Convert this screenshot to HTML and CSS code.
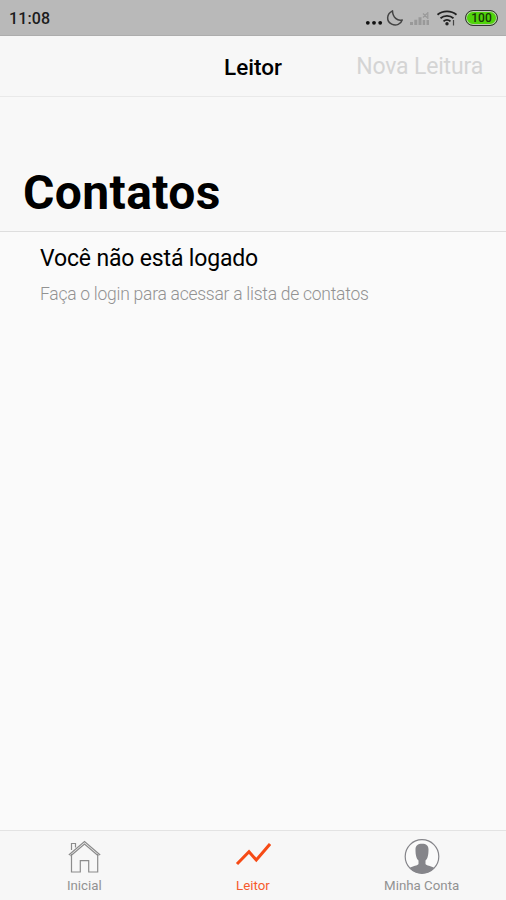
FILE: index.html
```html
<!DOCTYPE html>
<html lang="pt-BR">
<head>
<meta charset="utf-8">
<meta name="viewport" content="width=device-width, initial-scale=1">
<title>Leitor</title>
<link rel="stylesheet" href="styles.css">
</head>
<body>
<div class="app">
  <div class="status">
    <span class="time">11:08</span>
    <svg class="status-icons" width="98" height="24" viewBox="365 6 98 24">
      <g fill="#111"><circle cx="367.8" cy="22.8" r="1.9"/><circle cx="374" cy="22.8" r="1.9"/><circle cx="380.2" cy="22.8" r="1.9"/></g>
      <path d="M392.5 10.8c-6 3-6.600 10.500-.8 13.400 4.600 2.200 9.300-.3 10.500-4.200-4.600 1.300-9.600-2.500-9.700-9.200z" fill="none" stroke="#444" stroke-width="1.500" stroke-linejoin="round"/>
      <g fill="#999"><path d="M410 22h3v3h-3zM414.300 19.800h3V25h-3zM418.500 17.200h3V25h-3zM422.700 20h2.500v5h-2.500zM426.500 20h2.500v5h-2.500z"/><path d="M423 13.500l4 4m0-4l-4 4M427.800 12v7" stroke="#999" stroke-width="1.200"/></g>
      <g fill="none" stroke="#222" stroke-width="1.800"><path d="M437.500 14.700c5.200-4.500 13.800-4.500 19 0M440.500 18.200c3.600-3.100 9.400-3.100 13 0M443.500 21.300c2-1.800 5-1.800 7 0"/></g>
      <circle cx="447" cy="23.800" r="1.700" fill="#222"/><path d="M453.500 20v5.500" stroke="#444" stroke-width="1.200"/>
    </svg>
    <span class="battery">100</span>
  </div>
  <header class="nav">
    <span class="nav-title">Leitor</span>
    <span class="nav-action">Nova Leitura</span>
  </header>
  <div class="hero"><h1>Contatos</h1></div>
  <main class="content">
    <h2>Você não está logado</h2>
    <p>Faça o login para acessar a lista de contatos</p>
  </main>
  <nav class="tabs">
    <div class="tab">
      <svg width="36" height="38" viewBox="66 838 36 38" fill="none" stroke="#8c8c8c" stroke-width="1.200"><path d="M71.500 854v18h8.800v-11.300h8.400V872h9V854M68.800 855l15.700-13.500L100.200 855M70.500 856l14-12 14 12M71.500 850v-6.500h4v4"/></svg>
      <span>Inicial</span>
    </div>
    <div class="tab active">
      <svg width="36" height="38" viewBox="235.500 838 36 38" fill="none" stroke="#f64b16" stroke-width="3"><path d="M237.500 864l12-12.300 7.300 8.300L270.500 844"/></svg>
      <span>Leitor</span>
    </div>
    <div class="tab">
      <svg width="36" height="38" viewBox="404 838 36 38"><circle cx="422" cy="856.500" r="16.800" fill="#fafafa" stroke="#85858a" stroke-width="1.200"/><path d="M415.500 849.500c0-3.800 2.200-5.700 6.500-5.700s6.500 1.900 6.500 5.700c0 3-.2 5-.8 7.300-.5 1.700-1.200 2.700-2.200 3.800v3.400c.5 1.500 6 2 8.700 3.800-3 4-7 5.700-12.200 5.700s-9.200-1.700-12.200-5.700c2.700-1.800 8.200-2.300 8.700-3.800v-3.400c-1-1.100-1.700-2.100-2.200-3.800-.6-2.300-.8-4.300-.8-7.300z" fill="#85858a"/></svg>
      <span>Minha Conta</span>
    </div>
  </nav>
</div>
</body>
</html>
```
FILE: styles.css
```css
body { margin: 0; font-family: Roboto, sans-serif; color: #000; }
.app { height: 900px; display: flex; flex-direction: column; background: #fafafa; }
.status { height: 36px; box-sizing: border-box; border-bottom: 1px solid #adadad; background: #b9b9b9; display: flex; align-items: center; padding: 0 9px; }
.time { font-size: 16px; font-weight: 500; letter-spacing: .15px; color: #1c1c1c; padding-top: 2px; }
.status-icons { margin-left: auto; }
.battery { width: 33px; height: 16px; box-sizing: border-box; margin: 0 -1px 0 2px; border: 1.500px solid #333; border-radius: 8px; background: #50d40b; box-shadow: inset 0 0 0 1px #b9c9b0; text-align: center; font-size: 12px; line-height: 14px; font-weight: 500; color: #183608; }
.nav { height: 61px; box-sizing: border-box; border-bottom: 1px solid #e9e9e9; background: #f7f7f7; display: grid; grid-template-columns: 1fr auto 1fr; align-items: center; padding: 1px 23px 0; font-size: 23px; line-height: 28px; }
.nav-title { grid-column: 2; font-weight: 500; font-size: 22.500px; }
.nav-action { justify-self: end; padding-top: 1px; color: #d4d4d4; white-space: nowrap; letter-spacing: -.17px; }
.hero { height: 135px; box-sizing: border-box; border-bottom: 1px solid #dedede; background: #f8f8f8; display: flex; align-items: flex-end; padding: 0 23px 11px; }
.hero h1 { margin: 0; font-size: 48px; line-height: 54px; font-weight: 700; letter-spacing: .4px; }
.content { flex: 1; padding: 13px 40px 12px; }
.content h2 { margin: 0; font-size: 23px; line-height: 28px; font-weight: 400; letter-spacing: -.16px; }
.content p { margin: 11px 0 0; font-size: 17.500px; line-height: 20px; font-weight: 300; letter-spacing: -.26px; color: #929292; white-space: nowrap; }
.tabs { height: 70px; box-sizing: border-box; border-top: 1px solid #e3e3e3; background: #f7f7f7; display: grid; grid-template-columns: repeat(3, 1fr); }
.tab { display: flex; flex-direction: column; align-items: center; padding-top: 7px; font-size: 13.300px; line-height: 18px; color: #929292; }
.tab svg { display: block; }
.tab span { margin-top: 1px; }
.active { color: #f65a2d; }
```
